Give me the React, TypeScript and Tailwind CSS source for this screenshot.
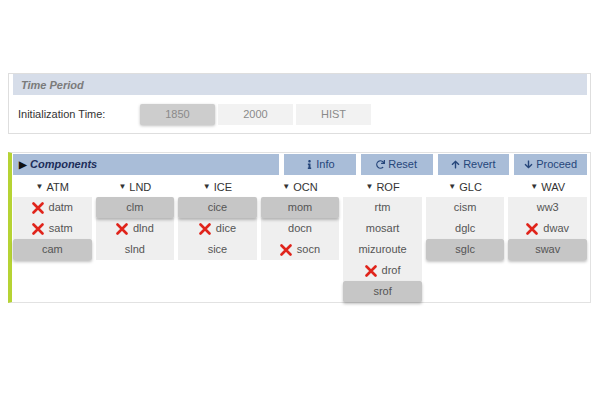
import React from "react";
import { FaInfo, FaRedo, FaArrowUp, FaArrowDown } from "react-icons/fa";

type Item = { name: string; x?: boolean; sel?: boolean };
const cols: { title: string; items: Item[] }[] = [
  { title: "ATM", items: [{ name: "datm", x: true }, { name: "satm", x: true }, { name: "cam", sel: true }] },
  { title: "LND", items: [{ name: "clm", sel: true }, { name: "dlnd", x: true }, { name: "slnd" }] },
  { title: "ICE", items: [{ name: "cice", sel: true }, { name: "dice", x: true }, { name: "sice" }] },
  { title: "OCN", items: [{ name: "mom", sel: true }, { name: "docn" }, { name: "socn", x: true }] },
  { title: "ROF", items: [{ name: "rtm" }, { name: "mosart" }, { name: "mizuroute" }, { name: "drof", x: true }, { name: "srof", sel: true }] },
  { title: "GLC", items: [{ name: "cism" }, { name: "dglc" }, { name: "sglc", sel: true }] },
  { title: "WAV", items: [{ name: "ww3" }, { name: "dwav", x: true }, { name: "swav", sel: true }] },
];

function RedX() {
  return (
    <svg width="12" height="12" viewBox="0 0 12 12" className="mr-[5px] shrink-0">
      <path d="M1.5 1.5 L10.5 10.5 M10.5 1.5 L1.5 10.5" stroke="#e0241b" strokeWidth="2.6" strokeLinecap="round" />
    </svg>
  );
}

export default function App() {
  return (
    <div className="w-[600px] h-[400px] bg-white text-[11px] pt-[73px]" style={{ fontFamily: '"Liberation Sans", Arial, sans-serif' }}>
      {/* Time Period */}
      <div className="mx-[8px] w-[583px] h-[61px] border border-[#dedede] pl-[4px] pr-[3px]">
        <div className="h-[21px] bg-[#d6dde9] flex items-center pl-[8px] pt-[1px] text-[11px] italic font-bold text-[#7b7b7b]">Time Period</div>
        <div className="flex items-center h-[38px] pt-[1px]">
          <div className="w-[127px] pl-[5px] text-[#333]">Initialization Time:</div>
          <div className="flex gap-[3px]">
            <div className="w-[75px] h-[21px] flex items-center justify-center bg-[#cdcdcd] text-[#8a8a8a] shadow-[0_1px_3px_rgba(0,0,0,0.25)] rounded-[2px]">1850</div>
            <div className="w-[75px] h-[21px] flex items-center justify-center bg-[#f2f2f2] text-[#8a8a8a]">2000</div>
            <div className="w-[75px] h-[21px] flex items-center justify-center bg-[#f2f2f2] text-[#8a8a8a]">HIST</div>
          </div>
        </div>
      </div>

      {/* Components */}
      <div className="mx-[8px] mt-[18px] w-[583px] h-[151px] border-y border-r border-[#e2e2e2] border-l-[4px] border-l-[#b6d334] pl-[1px] pr-[3px] pt-[1px] flex flex-col">
        <div className="flex h-[21px] gap-[5px]">
          <div className="w-[267px] bg-[#a9bdd8] flex items-center pl-[6px] italic font-bold text-[#1c2d5a]">
            <span className="text-[10px] mr-[3px] not-italic text-[#111]">▶</span>Components
          </div>
          <div className="w-[72px] bg-[#a9bdd8] flex items-center justify-center text-[#26467a] gap-[2px]"><FaInfo size={9} />Info</div>
          <div className="w-[72px] bg-[#a9bdd8] flex items-center justify-center text-[#26467a] gap-[3px]"><FaRedo size={9} />Reset</div>
          <div className="w-[72px] bg-[#a9bdd8] flex items-center justify-center text-[#26467a] gap-[3px]"><FaArrowUp size={9} />Revert</div>
          <div className="w-[73px] bg-[#a9bdd8] flex items-center justify-center text-[#26467a] gap-[3px]"><FaArrowDown size={9} />Proceed</div>
        </div>
        <div className="grid grid-cols-7 gap-x-[4px] w-[574px]">
          {cols.map((c) => (
            <div key={c.title} className="flex flex-col">
              <div className="h-[22px] flex items-center justify-center text-[#333] pt-[2px]">
                <span className="text-[8px] mr-[3px]">▼</span>
                {c.title}
              </div>
              {c.items.map((it) => (
                <div
                  key={it.name}
                  className={
                    "h-[21px] flex items-center justify-center text-[#555] " +
                    (it.sel
                      ? "bg-[#c6c6c6] shadow-[0_2px_3px_rgba(0,0,0,0.25)] rounded-[2px] relative z-10"
                      : "bg-[#efefef]")
                  }
                >
                  {it.x && <RedX />}
                  {it.name}
                </div>
              ))}
            </div>
          ))}
        </div>
      </div>
    </div>
  );
}
